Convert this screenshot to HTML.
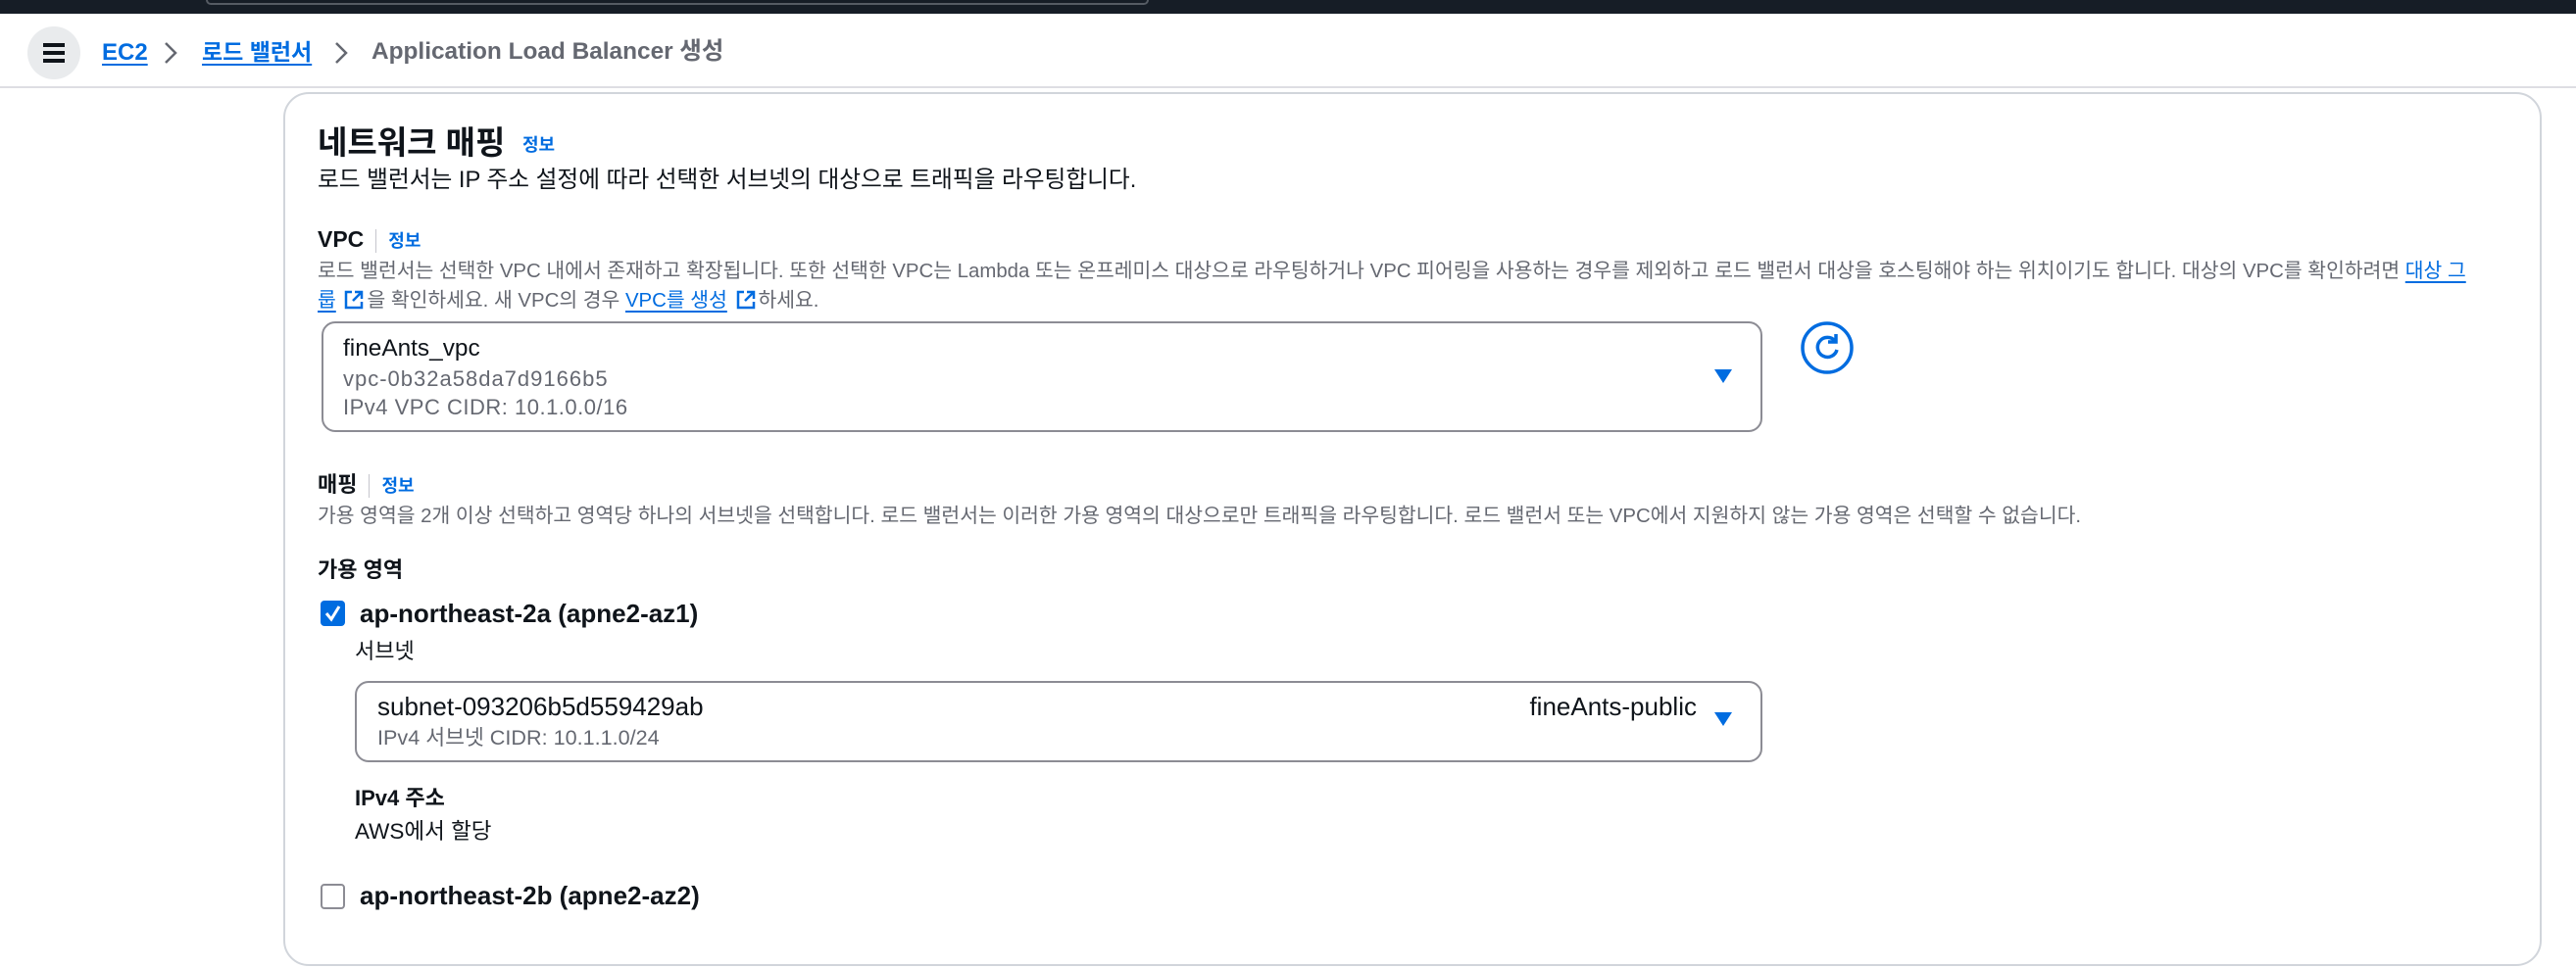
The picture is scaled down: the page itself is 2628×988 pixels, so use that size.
<!DOCTYPE html>
<html><head><meta charset="utf-8"><style>
*{margin:0;padding:0;box-sizing:border-box}
body{width:2628px;height:988px;background:#fff;position:relative;overflow:hidden;font-family:"Liberation Sans","Noto Sans CJK KR",sans-serif;color:#0f141a}
.a{position:absolute;white-space:nowrap;line-height:1}
.b{font-weight:bold}
.g{color:#656871}
.l{color:#006ce0}
.u{text-decoration:underline;text-underline-offset:4px}
.box{position:absolute;border:2px solid #8c8c94;border-radius:14px}
.tri{position:absolute;width:0;height:0;border-left:9px solid transparent;border-right:9px solid transparent;border-top:14px solid #006ce0}
.sep{display:inline-block;width:1px;height:24px;background:#c6c6cd;margin:0 12px;vertical-align:middle}
.ext{display:inline-block;width:20px;height:20px;vertical-align:-3px;margin:0 3px}
</style></head><body>
<div style="position:absolute;left:0;top:0;width:2628px;height:14px;background:#161d26"></div>
<div style="position:absolute;left:210px;top:0;width:962px;height:5px;border:2px solid #555b63;border-top:none;border-radius:0 0 8px 8px"></div>
<div style="position:absolute;left:28px;top:27px;width:54px;height:54px;border-radius:50%;background:#e9ebed"></div>
<div style="position:absolute;left:44px;top:44px;width:22px;height:4px;background:#0f141a;box-shadow:0 8px 0 #0f141a,0 16px 0 #0f141a"></div>
<div class="a l u b" style="left:104px;top:42px;font-size:24px">EC2</div>
<svg style="position:absolute;left:166px;top:42px" width="16" height="24"><path d="M3 2 L13 12 L3 22" fill="none" stroke="#656871" stroke-width="2.5"/></svg>
<div class="a l u b" style="left:206px;top:42px;font-size:23px">로드 밸런서</div>
<svg style="position:absolute;left:340px;top:42px" width="16" height="24"><path d="M3 2 L13 12 L3 22" fill="none" stroke="#656871" stroke-width="2.5"/></svg>
<div class="a g b" style="left:379px;top:41px;font-size:24.4px">Application Load Balancer 생성</div>
<div style="position:absolute;left:0;top:88px;width:2628px;height:2px;background:#dedee3"></div>
<div style="position:absolute;left:289px;top:94px;width:2304px;height:892px;border:2px solid #d1d5db;border-radius:26px"></div>
<div class="a b" style="left:324px;top:129px;font-size:33px">네트워크 매핑</div>
<div class="a l b" style="left:533px;top:139px;font-size:18px">정보</div>
<div class="a" style="left:324px;top:173px;font-size:23.7px">로드 밸런서는 IP 주소 설정에 따라 선택한 서브넷의 대상으로 트래픽을 라우팅합니다.</div>
<div class="a b" style="left:324px;top:233px;font-size:23px">VPC<span class="sep"></span><span class="l" style="font-size:18px">정보</span></div>
<div class="a g" style="left:324px;top:267px;font-size:20.4px">로드 밸런서는 선택한 VPC 내에서 존재하고 확장됩니다. 또한 선택한 VPC는 Lambda 또는 온프레미스 대상으로 라우팅하거나 VPC 피어링을 사용하는 경우를 제외하고 로드 밸런서 대상을 호스팅해야 하는 위치이기도 합니다. 대상의 VPC를 확인하려면 <span class="l u">대상 그</span></div>
<div class="a g" style="left:324px;top:296px;font-size:20.4px"><span class="l u">룹</span> <svg class="ext" viewBox="0 0 20 20"><path d="M8 2 H2 V18 H18 V12 M11 2 H18 V9 M18 2 L9 11" fill="none" stroke="#006ce0" stroke-width="2.5"/></svg>을 확인하세요. 새 VPC의 경우 <span class="l u">VPC를 생성</span> <svg class="ext" viewBox="0 0 20 20"><path d="M8 2 H2 V18 H18 V12 M11 2 H18 V9 M18 2 L9 11" fill="none" stroke="#006ce0" stroke-width="2.5"/></svg>하세요.</div>
<div class="box" style="left:328px;top:328px;width:1470px;height:113px"></div>
<div class="a" style="left:350px;top:344px;font-size:24.4px">fineAnts_vpc</div>
<div class="a g" style="left:350px;top:376px;font-size:22px;letter-spacing:1px">vpc-0b32a58da7d9166b5</div>
<div class="a g" style="left:350px;top:405px;font-size:22px;letter-spacing:0.5px">IPv4 VPC CIDR: 10.1.0.0/16</div>
<div class="tri" style="left:1749px;top:377px"></div>
<svg style="position:absolute;left:1836px;top:327px" width="56" height="56" viewBox="0 0 56 56"><circle cx="28" cy="28" r="25" fill="none" stroke="#006ce0" stroke-width="3.5"/><path d="M36 21 A10 10 0 1 0 38 30" fill="none" stroke="#006ce0" stroke-width="3.5"/><path d="M37 14 L37 22 L29 22" fill="none" stroke="#006ce0" stroke-width="3.5"/></svg>
<div class="a b" style="left:324px;top:484px;font-size:22px">매핑<span class="sep"></span><span class="l" style="font-size:18px">정보</span></div>
<div class="a g" style="left:324px;top:517px;font-size:20.4px">가용 영역을 2개 이상 선택하고 영역당 하나의 서브넷을 선택합니다. 로드 밸런서는 이러한 가용 영역의 대상으로만 트래픽을 라우팅합니다. 로드 밸런서 또는 VPC에서 지원하지 않는 가용 영역은 선택할 수 없습니다.</div>
<div class="a b" style="left:324px;top:571px;font-size:22px">가용 영역</div>
<div style="position:absolute;left:327px;top:613px;width:25px;height:26px;background:#006ce0;border-radius:4px"></div>
<svg style="position:absolute;left:327px;top:613px" width="25" height="26"><path d="M6 13 L11 19 L19 6" fill="none" stroke="#fff" stroke-width="3"/></svg>
<div class="a b" style="left:367px;top:613px;font-size:26px">ap-northeast-2a (apne2-az1)</div>
<div class="a" style="left:362px;top:654px;font-size:22px">서브넷</div>
<div class="box" style="left:362px;top:695px;width:1436px;height:83px"></div>
<div class="a" style="left:385px;top:708px;font-size:26px">subnet-093206b5d559429ab</div>
<div class="a g" style="left:385px;top:742px;font-size:21.6px">IPv4 서브넷 CIDR: 10.1.1.0/24</div>
<div class="a" style="right:897px;top:708px;font-size:26px">fineAnts-public</div>
<div class="tri" style="left:1749px;top:727px"></div>
<div class="a b" style="left:362px;top:804px;font-size:22px">IPv4 주소</div>
<div class="a" style="left:362px;top:838px;font-size:22.5px">AWS에서 할당</div>
<div style="position:absolute;left:327px;top:902px;width:25px;height:26px;border:2.5px solid #8c8c94;border-radius:4px"></div>
<div class="a b" style="left:367px;top:901px;font-size:26px">ap-northeast-2b (apne2-az2)</div>
</body></html>
